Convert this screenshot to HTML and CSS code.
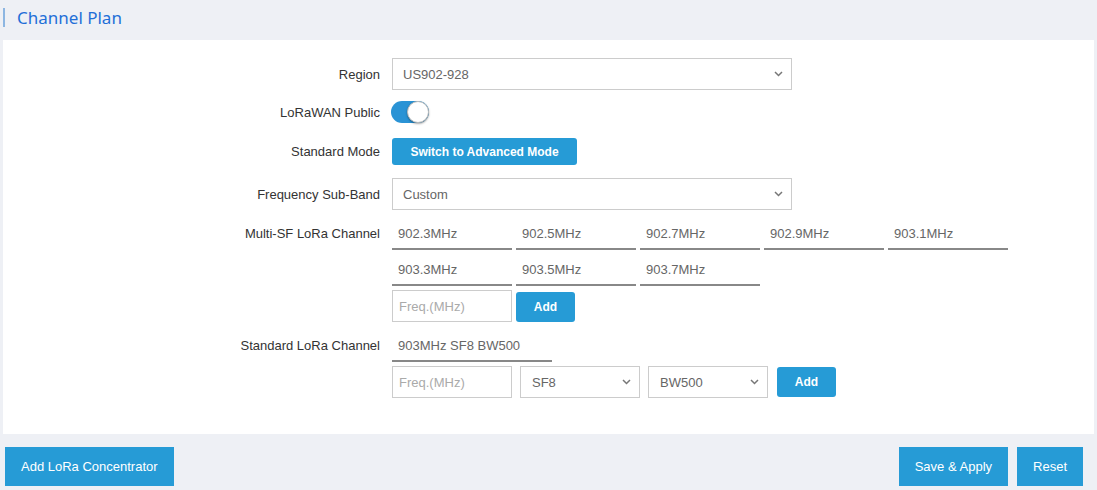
FILE: index.html
```html
<!DOCTYPE html>
<html lang="en">
<head>
<meta charset="utf-8">
<title>Channel Plan</title>
<link rel="stylesheet" href="styles.css">
</head>
<body>
<div class="header"><span class="title">Channel Plan</span></div>
<div class="panel">
  <div class="row r-region">
    <label class="lbl">Region</label>
    <div class="ctl"><select class="sel wide"><option>US902-928</option></select></div>
  </div>
  <div class="row r-toggle">
    <label class="lbl">LoRaWAN Public</label>
    <div class="ctl"><span class="toggle"><span class="knob"></span></span></div>
  </div>
  <div class="row r-mode">
    <label class="lbl">Standard Mode</label>
    <div class="ctl"><button class="btn btn-sm btn-mode">Switch to Advanced Mode</button></div>
  </div>
  <div class="row r-sub">
    <label class="lbl">Frequency Sub-Band</label>
    <div class="ctl"><select class="sel wide"><option>Custom</option></select></div>
  </div>
  <div class="row r-multi">
    <label class="lbl lbl-top">Multi-SF LoRa Channel</label>
    <div class="ctl stack">
      <div class="chips">
        <div class="chip">902.3MHz</div>
        <div class="chip">902.5MHz</div>
        <div class="chip">902.7MHz</div>
        <div class="chip">902.9MHz</div>
        <div class="chip">903.1MHz</div>
        <div class="chip">903.3MHz</div>
        <div class="chip">903.5MHz</div>
        <div class="chip">903.7MHz</div>
      </div>
      <div class="addrow">
        <input class="inp" type="text" placeholder="Freq.(MHz)">
        <button class="btn btn-sm btn-add">Add</button>
      </div>
    </div>
  </div>
  <div class="row r-std">
    <label class="lbl lbl-top">Standard LoRa Channel</label>
    <div class="ctl stack">
      <div class="chip chip-std">903MHz SF8 BW500</div>
      <div class="addrow addrow-std">
        <input class="inp" type="text" placeholder="Freq.(MHz)">
        <select class="sel narrow"><option>SF8</option></select>
        <select class="sel narrow"><option>BW500</option></select>
        <button class="btn btn-sm btn-add">Add</button>
      </div>
    </div>
  </div>
</div>
<div class="footer">
  <button class="btn btn-lg">Add LoRa Concentrator</button>
  <div class="footer-right">
    <button class="btn btn-lg">Save &amp; Apply</button>
    <button class="btn btn-lg">Reset</button>
  </div>
</div>
</body>
</html>
```

FILE: styles.css
```css
* { box-sizing: border-box; }
html, body { margin: 0; padding: 0; }
body {
  width: 1097px;
  height: 490px;
  background: #eef0f5;
  font-family: "Liberation Sans", Arial, sans-serif;
  font-size: 13px;
  color: #333;
  overflow: hidden;
}
.header {
  height: 40px;
  padding: 8px 0 0 3px;
}
.title {
  display: block;
  border-left: 2px solid #8db6e2;
  height: 19px;
  line-height: 19px;
  padding-left: 12px;
  font-family: "Noto Sans", "Open Sans", sans-serif;
  font-size: 17px;
  color: #1f6fd8;
}
.panel {
  margin: 0 3px;
  background: #fff;
  height: 394px;
  padding-top: 18px;
  display: flex;
  flex-direction: column;
}
.row {
  display: grid;
  grid-template-columns: 377px 1fr;
  column-gap: 12px;
  align-items: center;
}
.r-toggle { margin-top: 11px; }
.r-mode { margin-top: 15px; }
.r-sub { margin-top: 13px; }
.r-multi { margin-top: 8px; align-items: start; }
.r-std { margin-top: 8px; align-items: start; }
.lbl {
  text-align: right;
  color: #333;
  white-space: nowrap;
}
.lbl-top { line-height: 32px; }
.ctl { display: flex; }
.stack { flex-direction: column; gap: 4px; }
.sel {
  -webkit-appearance: none;
  appearance: none;
  height: 32px;
  border: 1px solid #ccc;
  border-radius: 0;
  background: #fff url("data:image/svg+xml,%3Csvg xmlns='http://www.w3.org/2000/svg' width='9' height='6' viewBox='0 0 9 6'%3E%3Cpolyline points='1,1 4.5,4.5 8,1' fill='none' stroke='%23777' stroke-width='1.5'/%3E%3C/svg%3E") no-repeat right 8px center;
  font-family: "Liberation Sans", Arial, sans-serif;
  font-size: 13px;
  color: #666;
  padding: 0 20px 0 10px;
  margin: 0;
  outline: none;
}
.wide { width: 400px; }
.narrow { width: 120px; padding-left: 11px; }
.toggle {
  display: block;
  width: 38px;
  height: 22px;
  margin-left: -1px;
  border-radius: 11px;
  background: #2a93d5;
  position: relative;
}
.knob {
  position: absolute;
  right: 0;
  top: 0;
  width: 22px;
  height: 22px;
  border-radius: 50%;
  background: #fff;
  border: 1px solid #bbb;
  box-shadow: 0 1px 2px rgba(0,0,0,0.35);
}
.btn {
  border: 0;
  margin: 0;
  background: #269bd6;
  color: #fff;
  font-family: "Liberation Sans", Arial, sans-serif;
  cursor: pointer;
}
.btn-sm {
  font-size: 12px;
  font-weight: bold;
  border-radius: 3px;
}
.btn-mode {
  height: 27px;
  width: 185px;
}
.btn-add {
  height: 30px;
  width: 59px;
}
.chips {
  display: grid;
  grid-template-columns: repeat(5, 120px);
  gap: 4px;
}
.chip {
  height: 32px;
  line-height: 31px;
  padding-left: 6px;
  border-bottom: 2px solid #888;
  color: #666;
  white-space: nowrap;
}
.chip-std { width: 160px; }
.addrow {
  display: flex;
  gap: 4px;
  align-items: flex-end;
}
.addrow-std {
  gap: 8px;
  align-items: center;
}
.addrow-std .btn-add { margin-left: 1px; }
.inp {
  width: 120px;
  height: 32px;
  border: 1px solid #ccc;
  border-radius: 0;
  padding: 0 6px;
  margin: 0;
  font-family: "Liberation Sans", Arial, sans-serif;
  font-size: 13px;
  color: #666;
  outline: none;
}
.inp::placeholder { color: #aaa; }
.footer {
  display: flex;
  justify-content: space-between;
  padding: 13px 14px 0 5px;
}
.footer-right {
  display: flex;
  gap: 9px;
}
.btn-lg {
  height: 39px;
  padding: 0 16px;
  font-size: 13px;
  border-radius: 0;
}
```
